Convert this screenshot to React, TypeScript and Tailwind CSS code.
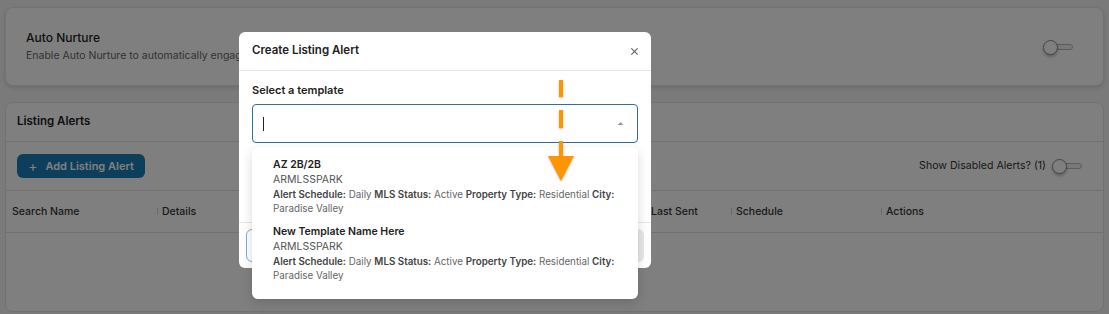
import React from "react";

function Toggle() {
  return (
    <div className="relative flex h-[16px] w-[31px] items-center">
      <div className="ml-[10px] h-[6px] w-[20px] rounded-full border border-[#b9b9b9] bg-[#f2f2f2]" />
      <div className="absolute left-0 top-[1px] h-[15px] w-[15px] rounded-full border border-[#8c8c8c] bg-white shadow-[0_2px_3px_rgba(0,0,0,0.25)]" />
    </div>
  );
}

function ColHead({ label, className = "" }: { label: string; className?: string }) {
  return (
    <div className={"flex items-center " + className}>
      <span className="mr-[4px] h-[7px] w-px bg-[#d6d6d6]" />
      <span>{label}</span>
    </div>
  );
}

const templates = [
  { name: "AZ 2B/2B", source: "ARMLSSPARK" },
  { name: "New Template Name Here", source: "ARMLSSPARK" },
];

export default function App() {
  return (
    <div className="relative h-[314px] w-[1109px] overflow-hidden bg-[#f4f4f4] font-['Inter',sans-serif] text-[#1f1f1f]">
      {/* page behind the modal */}
      <div className="flex flex-col gap-[16px] px-[5px] pt-[7px]">
        <div className="flex h-[79px] items-center justify-between rounded-lg border border-[#e4e4e4] bg-white pl-[20px] pr-[29px] shadow-[0_2px_4px_rgba(0,0,0,0.12)]">
          <div>
            <div className="text-[12px] font-medium leading-[17px] text-[#222]">Auto Nurture</div>
            <div className="mt-[2px] text-[10.5px] leading-[16px] text-[#666]">
              Enable Auto Nurture to automatically engage your contacts
            </div>
          </div>
          <Toggle />
        </div>

        <div className="h-[210px] rounded-lg border border-[#e4e4e4] bg-white">
          <div className="flex h-[39px] items-center border-b border-[#e2e2e2] pl-[11px] text-[11.5px] font-semibold text-[#222]">
            Listing Alerts
          </div>
          <div className="flex h-[49px] items-center justify-between border-b border-[#e2e2e2] pl-[11px] pr-[20px]">
            <button className="flex h-[24px] w-[128px] items-center justify-center gap-[8px] rounded-md bg-[#1a7cb8] text-[11px] font-semibold text-white">
              <span className="text-[14px] font-normal leading-none">+</span>
              Add Listing Alert
            </button>
            <div className="flex items-center gap-[6px] text-[10.6px] text-[#333]">
              <span>Show Disabled Alerts? (1)</span>
              <Toggle />
            </div>
          </div>
          <div className="flex h-[42px] items-center border-b border-[#e2e2e2] text-[10.5px] font-medium text-[#333]">
            <div className="w-[151px] pl-[6px]">Search Name</div>
            <ColHead label="Details" className="w-[489px]" />
            <ColHead label="Last Sent" className="w-[85px]" />
            <ColHead label="Schedule" className="w-[150px]" />
            <ColHead label="Actions" />
          </div>
        </div>
      </div>

      {/* overlay */}
      <div className="absolute inset-0 bg-black/50" />

      {/* modal */}
      <div className="absolute left-[239px] top-[32px] flex h-[236px] w-[412px] flex-col rounded-md bg-white">
        <div className="flex h-[39px] items-center justify-between border-b border-[#e6e6e6] pl-[13px] pr-[12px]">
          <span className="text-[11.5px] font-semibold text-[#222]">Create Listing Alert</span>
          <svg width="9" height="9" viewBox="0 0 10 10" className="text-[#666]">
            <path d="M1.5 1.5l7 7M8.5 1.5l-7 7" stroke="currentColor" strokeWidth="1.3" />
          </svg>
        </div>
        <div className="px-[13px] pt-[12px]">
          <div className="text-[11px] font-semibold leading-[15px] text-[#222]">Select a template</div>
          <div className="mt-[6px] flex h-[39px] items-center justify-between rounded border border-[#2f6e9f] pl-[10px] pr-[13px]">
            <span className="h-[14px] w-px bg-[#222]" />
            <svg width="7" height="5" viewBox="0 0 7 5">
              <path d="M0.5 4L3.5 1L6.5 4Z" fill="#9a9a9a" />
            </svg>
          </div>
        </div>
        <div className="mt-auto border-t border-[#e6e6e6] px-[7px] pb-[6px] pt-[6px]">
          <div className="flex gap-[6px]">
            <div className="h-[33px] flex-1 rounded-md border border-[#7fb0d6] bg-white" />
            <div className="h-[33px] flex-1 rounded-md bg-[#e7e7e7]" />
          </div>
        </div>
      </div>

      {/* dropdown menu */}
      <div className="absolute left-[252px] top-[147px] w-[386px] rounded-md bg-white pb-[16px] pl-[21px] pr-[16px] pt-[10px] shadow-[0_4px_12px_rgba(0,0,0,0.15)]">
        {templates.map((t, i) => (
          <div key={t.name} className={i > 0 ? "mt-[8px]" : ""}>
            <div className="text-[10.5px] font-semibold leading-[15px] text-[#222]">{t.name}</div>
            <div className="text-[10.5px] leading-[15px] text-[#555]">{t.source}</div>
            <div className="mt-[1px] text-[9.8px] leading-[14px] text-[#666]">
              <span className="whitespace-nowrap">
                <b className="font-semibold text-[#444]">Alert Schedule:</b> Daily{" "}
                <b className="font-semibold text-[#444]">MLS Status:</b> Active{" "}
                <b className="font-semibold text-[#444]">Property Type:</b> Residential{" "}
                <b className="font-semibold text-[#444]">City:</b>
              </span>
              <br />
              Paradise Valley
            </div>
          </div>
        ))}
      </div>

      {/* orange annotation arrow */}
      <svg
        className="absolute left-[546px] top-[78px] drop-shadow-[0_1px_1px_rgba(0,0,0,0.25)]"
        width="30"
        height="106"
        viewBox="0 0 30 106"
      >
        <rect x="13" y="2" width="4" height="17" fill="#ff9500" />
        <rect x="13" y="32" width="4" height="18" fill="#ff9500" />
        <rect x="13" y="63" width="4" height="16" fill="#ff9500" />
        <path d="M2 78H28L15 103Z" fill="#ff9500" />
      </svg>
    </div>
  );
}
